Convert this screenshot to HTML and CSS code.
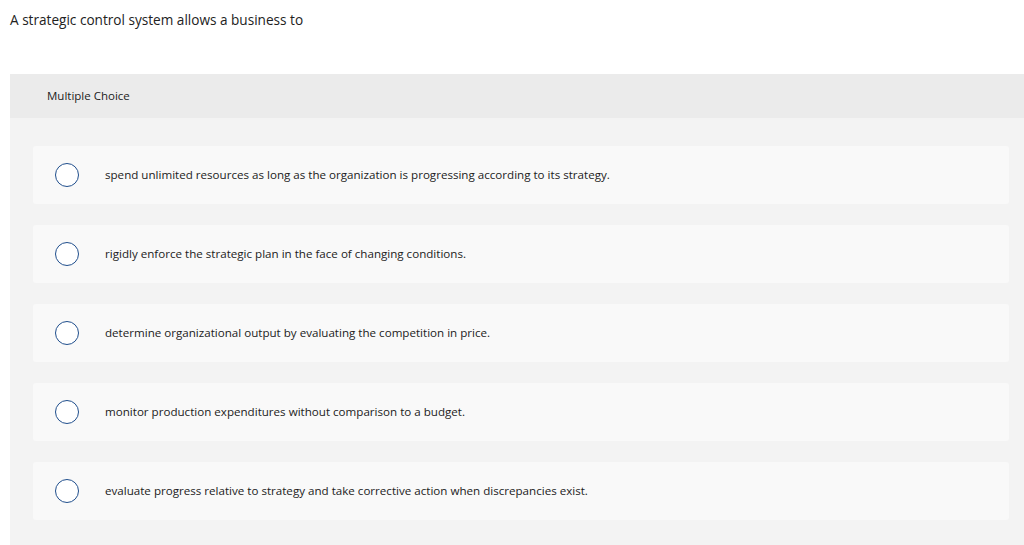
FILE: index.html
```html
<!DOCTYPE html>
<html>
<head>
<meta charset="utf-8">
<link rel="stylesheet" href="styles.css">
</head>
<body>
<div class="question">A strategic control system allows a business to</div>
<div class="panel">
  <div class="panel-head"><span class="head-text">Multiple Choice</span></div>
  <div class="options">
    <div class="option"><span class="radio"></span><span class="label">spend unlimited resources as long as the organization is progressing according to its strategy.</span></div>
    <div class="option"><span class="radio"></span><span class="label">rigidly enforce the strategic plan in the face of changing conditions.</span></div>
    <div class="option"><span class="radio"></span><span class="label">determine organizational output by evaluating the competition in price.</span></div>
    <div class="option"><span class="radio"></span><span class="label">monitor production expenditures without comparison to a budget.</span></div>
    <div class="option"><span class="radio"></span><span class="label">evaluate progress relative to strategy and take corrective action when discrepancies exist.</span></div>
  </div>
</div>
</body>
</html>
```
FILE: styles.css
```css
html, body {
  margin: 0;
  padding: 0;
  background: #ffffff;
  font-family: "Open Sans", "Liberation Sans", sans-serif;
  color: #222;
  overflow: hidden;
}
.question {
  padding: 11px 0 0 10px;
  height: 74px;
  box-sizing: border-box;
  font-size: 13.6px;
  line-height: 18px;
}
.panel {
  margin-left: 10px;
  background: #f3f3f3;
  height: 480px;
}
.panel-head {
  background: #ebebeb;
  height: 44px;
  padding-left: 37px;
  display: flex;
  align-items: center;
  font-size: 11.5px;
}
.head-text {
  padding-bottom: 2px;
}
.options {
  padding: 28px 15px 0 23px;
  display: flex;
  flex-direction: column;
  gap: 21px;
}
.option {
  background: #f9f9f9;
  border-radius: 3px;
  height: 58px;
  display: flex;
  align-items: center;
}
.radio {
  width: 22px;
  height: 22px;
  border: 1.5px solid #1f4e8c;
  border-radius: 50%;
  background: #fff;
  margin-left: 22px;
  flex: none;
}
.label {
  margin-left: 26px;
  font-size: 11.6px;
  padding-bottom: 2px;
}
```
